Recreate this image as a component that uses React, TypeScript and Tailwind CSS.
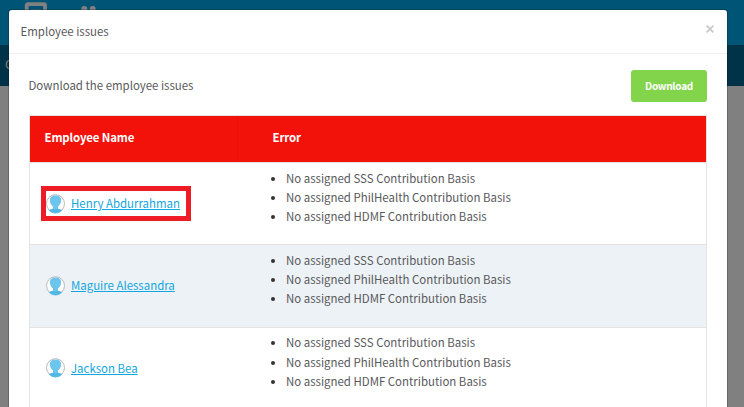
import { clsx } from "clsx";

const errors = [
  "No assigned SSS Contribution Basis",
  "No assigned PhilHealth Contribution Basis",
  "No assigned HDMF Contribution Basis",
];

const employees = [
  { id: 1, name: "Henry Abdurrahman", highlighted: true },
  { id: 2, name: "Maguire Alessandra", highlighted: false },
  { id: 3, name: "Jackson Bea", highlighted: false },
];

function Avatar() {
  return (
    <svg viewBox="0 0 20 20" className="h-5 w-5 shrink-0">
      <circle cx="9.5" cy="9.7" r="9" fill="#fff" stroke="#b9b9b9" strokeWidth="1" />
      <path
        d="M9.500 1.400c-3.600 0-5.600 1.900-5.600 4.900 0 2.700 1.200 4.800 3.100 6.100v1.600c0 .9-.9 1.100-2.300 1.400-.9.200-1.500.6-1.900 1.100a9 9 0 0 0 13.400 0c-.4-.5-1-.9-1.900-1.100-1.400-.3-2.300-.5-2.300-1.400v-1.600c1.900-1.300 3.100-3.400 3.100-6.100 0-3-2-4.900-5.600-4.900z"
        fill="#6bc5ec"
      />
      <path d="M3.100 16.300c1.600-1.200 3.300-.8 4.400-1.500 1 .9 3 .9 4 0 1.100.7 2.800.3 4.400 1.500a9 9 0 0 1-12.800 0z" fill="#52b7e3" />
    </svg>
  );
}

export default function App() {
  return (
    <div className="relative h-[407px] w-[744px] overflow-hidden bg-[#808080] font-['Noto_Sans_CJK_SC',sans-serif] text-[11.450px] text-[#58595b]">
      <div className="h-[45px] bg-[#005475]">
        <svg viewBox="0 0 110 45" className="h-[45px] w-[110px]">
          <rect x="26.700" y="4.200" width="18.300" height="20" rx="1" fill="none" stroke="#808080" strokeWidth="3.800" />
          <path d="M31 9.500h10" stroke="#808080" strokeWidth="1" opacity=".4" />
          <circle cx="84.300" cy="9" r="3" fill="#808080" />
          <circle cx="92.700" cy="9" r="3" fill="#808080" />
        </svg>
      </div>
      <div className="h-[41px] bg-[#003348] pl-[5px] text-[12px] leading-[38px] text-[#808080]">
        Overview
      </div>

      <div className="absolute top-[10px] left-[9px] h-[420px] w-[718px] rounded-t-[3px] bg-white shadow-[0_0_0_1px_rgba(0,0,0,0.2)]">
        <div className="flex h-11 items-center justify-between border-b border-[#f0f0f0] pr-[13px] pl-[11.500px]">
          <span className="pt-px">Employee issues</span>
          <svg viewBox="0 0 8 8" className="mb-[5px] h-2 w-2" stroke="#c8c8c8" strokeWidth="1.800">
            <path d="M.6.6l6.800 6.800M7.400.6L.6 7.400" />
          </svg>
        </div>

        <div className="px-5 pt-4">
          <div className="flex h-8 items-center justify-between">
            <span className="-ml-[0.500px] pb-px">Download the employee issues</span>
            <button className="h-8 w-[76px] rounded-[3px] bg-[#82d44b] pb-[2px] text-[10px] font-bold tracking-[-0.250px] text-white">
              Download
            </button>
          </div>

          <div className="mt-[13px] w-[678px] border border-[#e3e3e3]">
            <div className="flex h-[46px] items-center bg-[#f3120a] text-[11.450px] font-bold tracking-[-0.130px] text-white">
              <div className="flex h-full w-[208px] items-center border-r border-[#e8110a] pb-[2px] pl-[14.500px]">
                Employee Name
              </div>
              <div className="pb-[2px] pl-[34.500px]">Error</div>
            </div>
            {employees.map((e, i) => (
              <div
                key={e.id}
                className={clsx(
                  "flex h-[82.400px] border-t border-[#e3e3e3]",
                  i % 2 === 1 ? "bg-[#edf2f6]" : "bg-white",
                )}
              >
                <div className="flex w-[208px] items-center pl-[11px]">
                  <div
                    className={clsx(
                      "flex h-[35px] items-center gap-[5px] border-[5px]",
                      e.highlighted ? "w-[150px] border-[#ee1c25]" : "border-transparent",
                    )}
                  >
                    <Avatar />
                    <a className="whitespace-nowrap text-[#12a5e0] underline">{e.name}</a>
                  </div>
                </div>
                <ul className="list-disc pt-[5.500px] pl-12 leading-[19.300px] marker:text-[#333]">
                  {errors.map((error) => (
                    <li key={error}>{error}</li>
                  ))}
                </ul>
              </div>
            ))}
          </div>
        </div>
      </div>
    </div>
  );
}
